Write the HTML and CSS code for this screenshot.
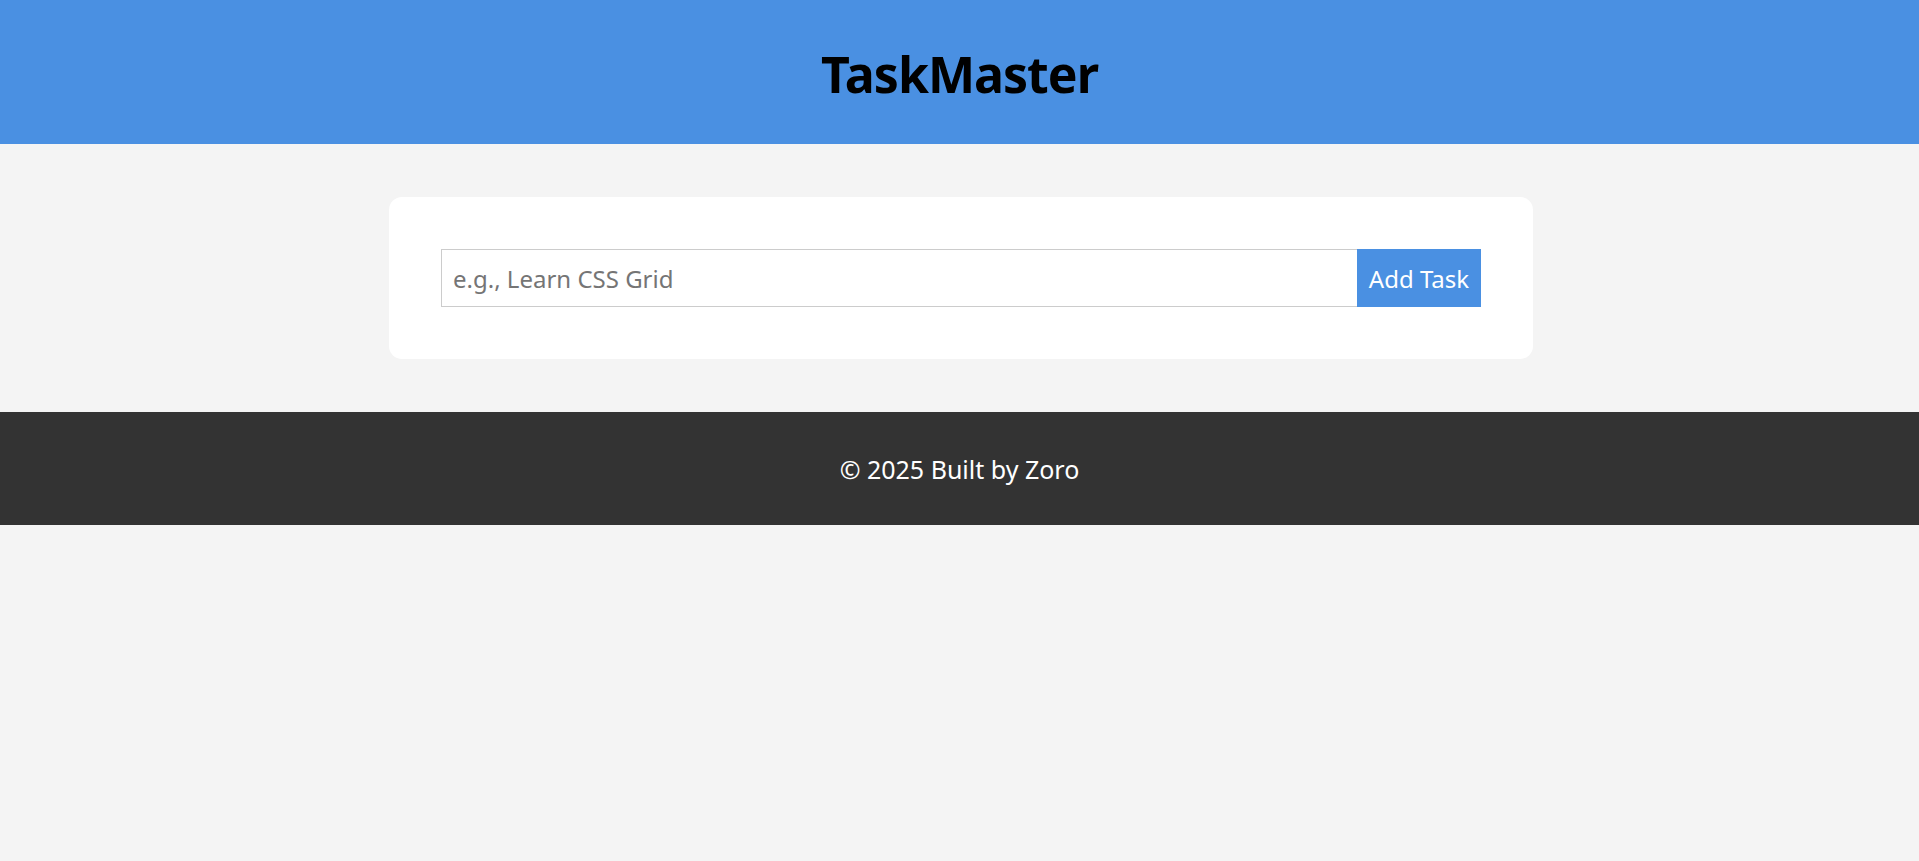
FILE: index.html
```html
<!DOCTYPE html>
<html lang="en">
<head>
<meta charset="utf-8">
<title>TaskMaster</title>
<link rel="stylesheet" href="styles.css">
</head>
<body>
<header class="site-header">
  <h1 class="site-title">TaskMaster</h1>
</header>
<main class="main">
  <section class="card">
    <form class="task-form">
      <input class="task-input" type="text" placeholder="e.g., Learn CSS Grid">
      <button class="task-button" type="button">Add Task</button>
    </form>
  </section>
</main>
<footer class="site-footer">
  <p class="footer-text">© 2025 Built by Zoro</p>
</footer>
</body>
</html>
```

FILE: styles.css
```css
* { box-sizing: border-box; }
html, body {
  margin: 0;
  padding: 0;
  background: #f4f4f4;
  font-family: "Noto Sans", "Open Sans", sans-serif;
}
.site-header {
  background: #4a90e2;
  height: 144px;
  display: flex;
  align-items: center;
  justify-content: center;
  padding-top: 3px;
}
.site-title {
  margin: 0;
  font-size: 50px;
  font-weight: 700;
  color: #000;
  letter-spacing: -1px;
  line-height: 1;
}
.main {
  padding: 53px 0 53px 3px;
  display: flex;
  justify-content: center;
}
.card {
  width: 1144px;
  background: #fff;
  border-radius: 13px;
  padding: 52px;
}
.task-form {
  display: flex;
  margin: 0;
}
.task-input {
  flex: 1;
  height: 58px;
  border: 1px solid #ccc;
  border-right: none;
  padding: 0 11px;
  font-family: inherit;
  font-size: 24px;
  color: #333;
  outline: none;
}
.task-input::placeholder { color: #757575; }
.task-button {
  width: 124px;
  height: 58px;
  border: none;
  background: #4a90e2;
  color: #fff;
  font-family: inherit;
  font-size: 24px;
  padding: 0;
  cursor: pointer;
}
.site-footer {
  background: #333;
  height: 113px;
  display: flex;
  align-items: center;
  justify-content: center;
}
.footer-text {
  margin: 0;
  color: #fff;
  font-size: 25px;
}
```
